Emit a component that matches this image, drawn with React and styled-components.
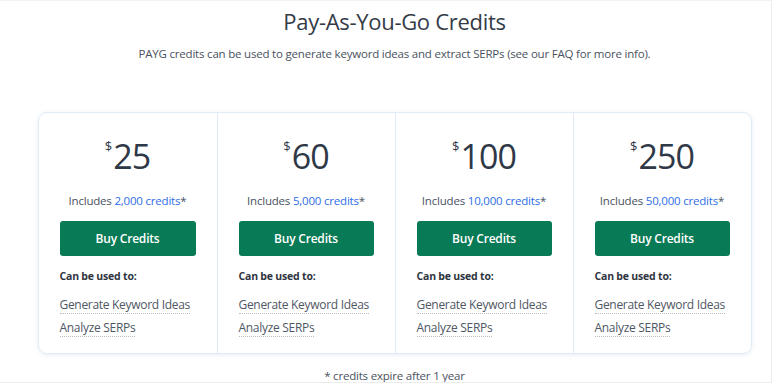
import styled, { createGlobalStyle } from "styled-components";

const GlobalStyle = createGlobalStyle`
  html, body {
    margin: 0;
    padding: 0;
    background: #ffffff;
  }
  body {
    font-family: "Open Sans", "Noto Sans", Arial, sans-serif;
    color: #3f4753;
  }
`;

const StyledPage = styled.div`
  width: 772px;
  height: 383px;
  padding-left: 18px;
  border-right: 1px solid #ececec;
  border-bottom: 1px solid #ececec;
  border-top: 1px solid #f2f2f2;
  box-sizing: border-box;
  display: flex;
  flex-direction: column;
  align-items: center;
  overflow: hidden;
`;

const StyledTitle = styled.h1`
  margin: 5px 0 0;
  font-size: 22px;
  line-height: 30px;
  font-weight: 500;
  letter-spacing: -0.3px;
  color: #343b47;
`;

const StyledSubtitle = styled.p`
  margin: 10px 0 0;
  font-size: 11.5px;
  line-height: 16px;
  letter-spacing: -0.2px;
  color: #4a5260;
`;

const StyledPlans = styled.div`
  margin-top: 50px;
  width: 714px;
  display: grid;
  grid-template-columns: repeat(4, 1fr);
  border: 1px solid #e1ebf7;
  border-radius: 9px;
  box-shadow: 0 1px 4px rgba(150, 180, 220, 0.25);
  box-sizing: border-box;
`;

const StyledPlan = styled.div`
  padding: 26px 21px 17px;
  display: flex;
  flex-direction: column;
  border-left: ${(p) => (p.$first ? "none" : "1px solid #e1ebf7")};
`;

const StyledPrice = styled.div`
  display: flex;
  justify-content: center;
  align-items: flex-start;
  color: #2f3847;
  font-weight: 500;
  line-height: 1;
`;

const StyledCurrency = styled.span`
  font-size: 13px;
  margin-top: 1px;
  margin-right: 1px;
`;

const StyledAmount = styled.span`
  font-size: 34px;
  letter-spacing: -1px;
`;

const StyledIncludes = styled.p`
  margin: 20px 0 0;
  text-align: center;
  font-size: 11.5px;
  line-height: 16px;
  letter-spacing: -0.2px;
  color: #4a5260;
`;

const StyledCredits = styled.span`
  color: #2d6ee8;
`;

const StyledBuyButton = styled.button`
  margin-top: 12px;
  height: 35px;
  border: none;
  border-radius: 3px;
  background-color: #087a55;
  color: #ffffff;
  font-family: inherit;
  font-size: 12px;
  font-weight: 600;
  letter-spacing: -0.2px;
  cursor: pointer;
`;

const StyledUsedTitle = styled.h4`
  margin: 13px 0 0;
  font-size: 10.5px;
  line-height: 14px;
  font-weight: 700;
  letter-spacing: -0.2px;
  color: #2f3540;
`;

const StyledUses = styled.ul`
  list-style: none;
  margin: 12px 0 0;
  padding: 0;
  display: flex;
  flex-direction: column;
  gap: 5px;
`;

const StyledUse = styled.li`
  line-height: 17px;

  span {
    font-size: 12px;
    letter-spacing: -0.3px;
    color: #4f5764;
    border-bottom: 1px dotted #b8bec8;
  }
`;

const StyledFootnote = styled.p`
  margin: 14px 0 0;
  font-size: 11.5px;
  line-height: 16px;
  letter-spacing: -0.2px;
  color: #4a5260;
`;

const plans = [
  { price: 25, credits: "2,000" },
  { price: 60, credits: "5,000" },
  { price: 100, credits: "10,000" },
  { price: 250, credits: "50,000" },
];

const uses = ["Generate Keyword Ideas", "Analyze SERPs"];

function App() {
  return (
    <>
      <GlobalStyle />
      <StyledPage>
        <StyledTitle>Pay-As-You-Go Credits</StyledTitle>
        <StyledSubtitle>
          PAYG credits can be used to generate keyword ideas and extract SERPs
          (see our FAQ for more info).
        </StyledSubtitle>

        <StyledPlans>
          {plans.map((plan, i) => (
            <StyledPlan key={plan.price} $first={i === 0}>
              <StyledPrice>
                <StyledCurrency>$</StyledCurrency>
                <StyledAmount>{plan.price}</StyledAmount>
              </StyledPrice>
              <StyledIncludes>
                Includes <StyledCredits>{plan.credits} credits</StyledCredits>*
              </StyledIncludes>
              <StyledBuyButton>Buy Credits</StyledBuyButton>
              <StyledUsedTitle>Can be used to:</StyledUsedTitle>
              <StyledUses>
                {uses.map((use) => (
                  <StyledUse key={use}>
                    <span>{use}</span>
                  </StyledUse>
                ))}
              </StyledUses>
            </StyledPlan>
          ))}
        </StyledPlans>

        <StyledFootnote>* credits expire after 1 year</StyledFootnote>
      </StyledPage>
    </>
  );
}

export default App;
